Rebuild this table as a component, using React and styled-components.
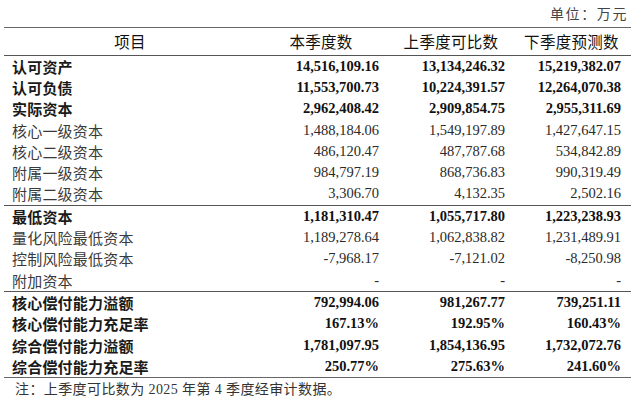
import styled, { createGlobalStyle } from 'styled-components'

const GlobalStyle = createGlobalStyle`
  body {
    margin: 0;
    background: #fff;
  }
`

const FONT = `"Liberation Serif", "Noto Sans CJK SC", serif`

const Page = styled.div`
  width: 640px;
  height: 404px;
  padding-left: 4px;
  box-sizing: border-box;
  font-family: ${FONT};
  color: #111;
  overflow: hidden;
`

const Caption = styled.div`
  width: 627px;
  height: 26.5px;
  display: flex;
  justify-content: flex-end;
  align-items: center;
  padding-right: 3px;
  box-sizing: border-box;
  font-size: 14px;
  letter-spacing: 1.6px;
  color: #444;
`

const Table = styled.div`
  width: 627px;
  border-top: 1.5px solid #666;
  border-bottom: 1.5px solid #666;
`

const Row = styled.div`
  display: grid;
  grid-template-columns: 252px 130px 126px 119px;
  align-items: center;
  height: ${(p) => (p.$head ? '27px' : '21.3px')};
`

const Section = styled.div`
  border-top: 1.5px solid #555;
`

const HeadCell = styled.div`
  text-align: center;
  font-size: 15.5px;
  color: #111;
  letter-spacing: 0.3px;
  padding-left: ${(p) => p.$shift || 0}px;
`

const Label = styled.div`
  padding-left: 8px;
  font-size: 15px;
  font-weight: ${(p) => (p.$bold ? 700 : 400)};
  color: ${(p) => (p.$bold ? '#1a1a1a' : '#3a3a3a')};
  letter-spacing: 0.2px;
`

const Num = styled.div`
  text-align: right;
  font-size: 14.5px;
  font-weight: ${(p) => (p.$bold ? 700 : 400)};
  color: ${(p) => (p.$bold ? '#111' : '#2a2a2a')};
  padding-right: ${(p) => p.$pad}px;
`

const Note = styled.div`
  height: 20px;
  display: flex;
  align-items: center;
  padding-left: 11px;
  font-size: 14px;
  color: #333;
  letter-spacing: 0.4px;
`

const PADS = [7, 7, 10]

const sections = [
  [
    ['认可资产', '14,516,109.16', '13,134,246.32', '15,219,382.07', true],
    ['认可负债', '11,553,700.73', '10,224,391.57', '12,264,070.38', true],
    ['实际资本', '2,962,408.42', '2,909,854.75', '2,955,311.69', true],
    ['核心一级资本', '1,488,184.06', '1,549,197.89', '1,427,647.15'],
    ['核心二级资本', '486,120.47', '487,787.68', '534,842.89'],
    ['附属一级资本', '984,797.19', '868,736.83', '990,319.49'],
    ['附属二级资本', '3,306.70', '4,132.35', '2,502.16'],
  ],
  [
    ['最低资本', '1,181,310.47', '1,055,717.80', '1,223,238.93', true],
    ['量化风险最低资本', '1,189,278.64', '1,062,838.82', '1,231,489.91'],
    ['控制风险最低资本', '-7,968.17', '-7,121.02', '-8,250.98'],
    ['附加资本', '-', '-', '-'],
  ],
  [
    ['核心偿付能力溢额', '792,994.06', '981,267.77', '739,251.11', true],
    ['核心偿付能力充足率', '167.13%', '192.95%', '160.43%', true],
    ['综合偿付能力溢额', '1,781,097.95', '1,854,136.95', '1,732,072.76', true],
    ['综合偿付能力充足率', '250.77%', '275.63%', '241.60%', true],
  ],
]

export default function App() {
  return (
    <Page lang="zh-CN">
      <GlobalStyle />
      <Caption>单位：万元</Caption>
      <Table>
        <Row $head>
          <HeadCell>项目</HeadCell>
          <HeadCell>本季度数</HeadCell>
          <HeadCell $shift={4}>上季度可比数</HeadCell>
          <HeadCell>下季度预测数</HeadCell>
        </Row>
        {sections.map((rows, i) => (
          <Section key={i}>
            {rows.map(([label, a, b, c, bold]) => (
              <Row key={label}>
                <Label $bold={bold}>{label}</Label>
                {[a, b, c].map((v, j) => (
                  <Num key={j} $bold={bold} $pad={PADS[j]}>
                    {v}
                  </Num>
                ))}
              </Row>
            ))}
          </Section>
        ))}
      </Table>
      <Note>注：上季度可比数为 2025 年第 4 季度经审计数据。</Note>
    </Page>
  )
}
